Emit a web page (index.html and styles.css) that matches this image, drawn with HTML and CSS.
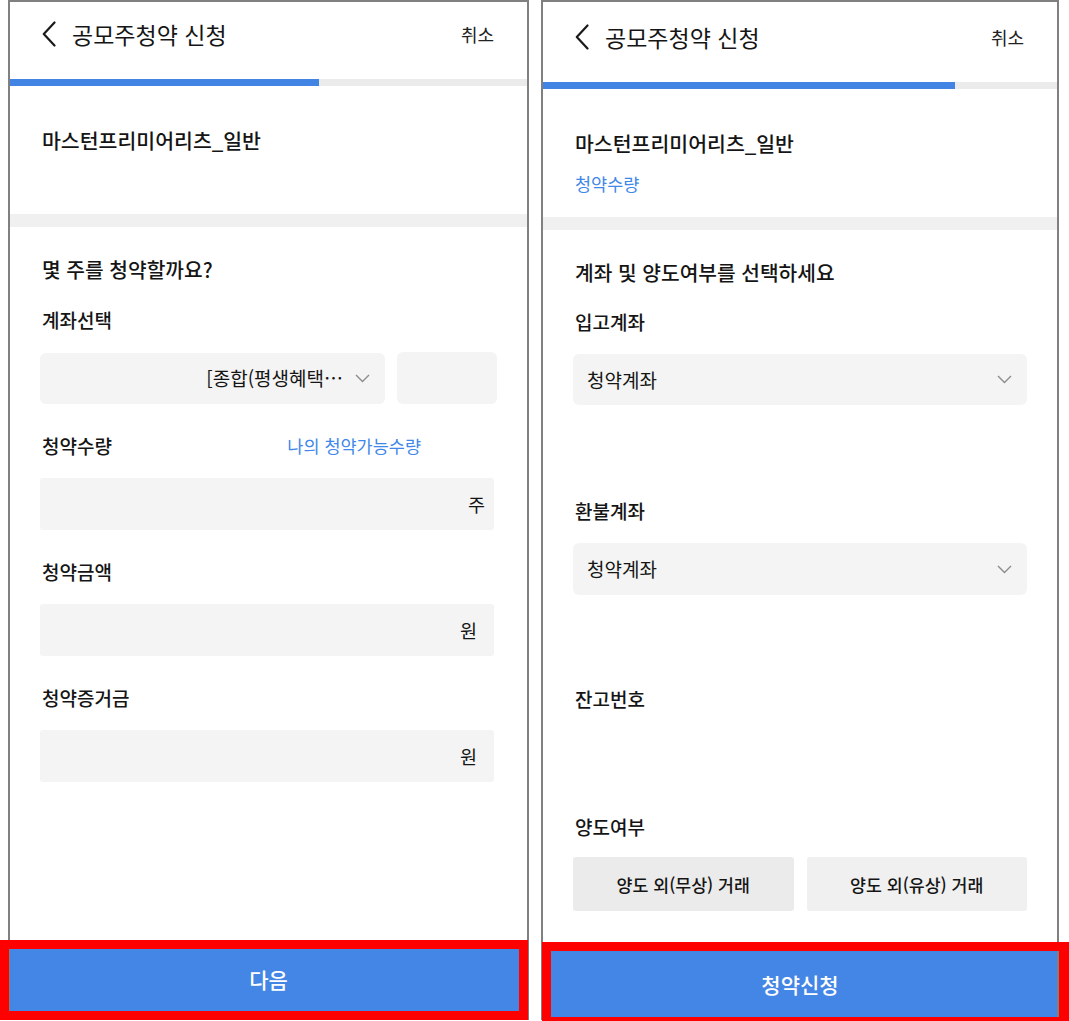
FILE: index.html
```html
<!DOCTYPE html>
<html lang="ko">
<head>
<meta charset="utf-8">
<title>공모주청약 신청</title>
<link rel="stylesheet" href="styles.css">
</head>
<body>
<div class="screens">
  <section class="panel panel--left">
    <header class="appbar">
      <svg class="appbar__back" width="14" height="26" viewBox="0 0 14 26"><path d="M12.5 1.5 L1.8 13 L12.5 24.5" fill="none" stroke="#1a1a1a" stroke-width="2.2" stroke-linecap="round" stroke-linejoin="round"/></svg>
      <h1 class="appbar__title">공모주청약 신청</h1>
      <span class="appbar__cancel">취소</span>
    </header>
    <div class="progress"><div class="progress__fill" style="width:59.8%"></div></div>
    <div class="product">
      <p class="product__name">마스턴프리미어리츠_일반</p>
    </div>
    <div class="band"></div>
    <div class="form">
      <h2 class="form__title">몇 주를 청약할까요?</h2>
      <div class="field field--first">
        <div class="field__label">계좌선택</div>
        <div class="account-row">
          <div class="select select--account">
            <span class="select__value">[종합(평생혜택…</span>
            <svg class="select__chev" width="15" height="9" viewBox="0 0 15 9"><path d="M1 1 L7.5 7.5 L14 1" fill="none" stroke="#8c8c8c" stroke-width="1.4"/></svg>
          </div>
          <div class="account-sub"></div>
        </div>
      </div>
      <div class="field">
        <div class="field__label field__label--split">
          <span>청약수량</span>
          <span class="link">나의 청약가능수량</span>
        </div>
        <div class="input input--qty"><span class="input__unit">주</span></div>
      </div>
      <div class="field">
        <div class="field__label">청약금액</div>
        <div class="input"><span class="input__unit">원</span></div>
      </div>
      <div class="field">
        <div class="field__label">청약증거금</div>
        <div class="input"><span class="input__unit">원</span></div>
      </div>
    </div>
    <button class="cta cta--left">다음</button>
  </section>

  <section class="panel panel--right">
    <header class="appbar">
      <svg class="appbar__back" width="14" height="26" viewBox="0 0 14 26"><path d="M12.5 1.5 L1.8 13 L12.5 24.5" fill="none" stroke="#1a1a1a" stroke-width="2.2" stroke-linecap="round" stroke-linejoin="round"/></svg>
      <h1 class="appbar__title">공모주청약 신청</h1>
      <span class="appbar__cancel">취소</span>
    </header>
    <div class="progress"><div class="progress__fill" style="width:80.2%"></div></div>
    <div class="product">
      <p class="product__name">마스턴프리미어리츠_일반</p>
      <p class="product__sub">청약수량</p>
    </div>
    <div class="band"></div>
    <div class="form form--right">
      <h2 class="form__title">계좌 및 양도여부를 선택하세요</h2>
      <div class="field field--in">
        <div class="field__label">입고계좌</div>
        <div class="select select--full">
          <span class="select__value select__value--left">청약계좌</span>
          <svg class="select__chev" width="15" height="9" viewBox="0 0 15 9"><path d="M1 1 L7.5 7.5 L14 1" fill="none" stroke="#8c8c8c" stroke-width="1.4"/></svg>
        </div>
      </div>
      <div class="field field--refund">
        <div class="field__label">환불계좌</div>
        <div class="select select--full select--tall">
          <span class="select__value select__value--left">청약계좌</span>
          <svg class="select__chev" width="15" height="9" viewBox="0 0 15 9"><path d="M1 1 L7.5 7.5 L14 1" fill="none" stroke="#8c8c8c" stroke-width="1.4"/></svg>
        </div>
      </div>
      <div class="field field--balance">
        <div class="field__label">잔고번호</div>
      </div>
      <div class="field field--transfer">
        <div class="field__label">양도여부</div>
        <div class="choices">
          <button class="choice choice--dark">양도 외(무상) 거래</button>
          <button class="choice">양도 외(유상) 거래</button>
        </div>
      </div>
    </div>
    <button class="cta cta--right">청약신청</button>
  </section>

  <div class="highlight highlight--left"></div>
  <div class="highlight highlight--right"></div>
</div>
</body>
</html>
```

FILE: styles.css
```css
html, body {
  margin: 0;
  padding: 0;
  overflow: hidden;
  background: #ffffff;
}

body {
  font-family: "Noto Sans CJK KR", "Noto Sans", sans-serif;
  color: #151515;
}

.screens {
  position: relative;
  display: flex;
  align-items: flex-start;
  gap: 12px;
  padding-left: 8px;
  height: 1021px;
}

.panel {
  box-sizing: border-box;
  height: 1020px;
  border: 2px solid #808080;
  background: #ffffff;
  display: flex;
  flex-direction: column;
}

.panel--left {
  width: 521px;
}

.panel--right {
  width: 518px;
  padding-top: 3px;
}

/* app bar */
.appbar {
  height: 64px;
  margin-bottom: 13px;
  display: flex;
  align-items: center;
  padding: 0 33px 0 32px;
}

.appbar__back {
  flex: none;
  display: block;
}

.appbar__title {
  margin: 0 0 0 16px;
  font-size: 23px;
  font-weight: 400;
  line-height: 30px;
  color: #151515;
}

.appbar__cancel {
  margin-left: auto;
  font-size: 18px;
  line-height: 24px;
  color: #222;
}

/* progress */
.progress {
  height: 7px;
  background: #ebebeb;
}

.progress__fill {
  height: 100%;
  background: #4284e4;
}

/* product */
.product {
  height: 128px;
  box-sizing: border-box;
  padding: 40px 32px 0;
}

.product__name {
  margin: 0;
  font-size: 20.5px;
  font-weight: 500;
  line-height: 28px;
  color: #151515;
}

.product__sub {
  margin: 16px 0 0;
  font-size: 17.5px;
  line-height: 22px;
  color: #3f87e8;
}

.band {
  height: 13px;
  background: #f0f0f0;
}

/* form */
.form {
  padding: 28px 33px 0 30px;
}

.form--right {
  padding: 28px 30px 0 30px;
}

.form__title {
  margin: 0;
  padding-left: 2px;
  font-size: 20.3px;
  font-weight: 500;
  line-height: 28px;
}

.field {
  margin-top: 29px;
}

.field--first {
  margin-top: 24px;
}

.field--in {
  margin-top: 23px;
}

.field--refund {
  margin-top: 93px;
}

.field--balance {
  margin-top: 91px;
}

.field--transfer {
  margin-top: 102px;
}

.field__label {
  padding-left: 2px;
  font-size: 19px;
  font-weight: 500;
  line-height: 26px;
  margin-bottom: 19px;
  color: #151515;
}

.field--transfer .field__label {
  margin-bottom: 17px;
}

.field__label--split {
  display: flex;
  justify-content: space-between;
}

.link {
  font-size: 17.5px;
  font-weight: 400;
  color: #3f87e8;
  margin-right: 73px;
}

/* account select row */
.account-row {
  display: flex;
  align-items: center;
  gap: 12px;
  margin-right: -3px;
}

.select {
  box-sizing: border-box;
  height: 51px;
  background: #f4f4f4;
  border-radius: 6px;
  display: flex;
  align-items: center;
  padding: 0 15px 0 14px;
}

.select--tall {
  height: 52px;
}

.select--account {
  flex: none;
  width: 345px;
  justify-content: flex-end;
}

.select__value {
  font-size: 19px;
  line-height: 24px;
  color: #151515;
  margin-right: 12px;
  white-space: nowrap;
}

.select__value--left {
  margin-right: auto;
}

.select__chev {
  flex: none;
  display: block;
}

.account-sub {
  flex: none;
  width: 100px;
  height: 52px;
  background: #f4f4f4;
  border-radius: 6px;
}

/* inputs */
.input {
  box-sizing: border-box;
  height: 52px;
  background: #f4f4f4;
  border-radius: 3px;
  display: flex;
  align-items: center;
  justify-content: flex-end;
  padding-right: 17px;
}

.input--qty {
  padding-right: 9px;
}

.input__unit {
  font-size: 18.5px;
  line-height: 24px;
  color: #151515;
}

/* choices */
.choices {
  display: flex;
  gap: 13px;
}

.choice {
  flex: 1;
  height: 54px;
  border: 0;
  border-radius: 3px;
  background: #f0f0f0;
  font-family: inherit;
  font-size: 17.3px;
  font-weight: 500;
  color: #151515;
  padding: 0;
}

.choice--dark {
  background: #ebebeb;
}

/* call to action */
.cta {
  margin-top: auto;
  height: 66px;
  border: 0;
  background: #4486e5;
  color: #ffffff;
  font-family: inherit;
  font-size: 21px;
  font-weight: 500;
  padding: 0;
}

.cta--left {
  margin-bottom: 6px;
}

.cta--right {
  margin-bottom: 1px;
}

/* annotation highlight boxes */
.highlight {
  position: absolute;
  box-sizing: border-box;
  border: 9px solid #ff0000;
  pointer-events: none;
}

.highlight--left {
  left: 0;
  top: 940px;
  width: 528px;
  height: 80px;
}

.highlight--right {
  left: 542px;
  top: 942px;
  width: 527px;
  height: 84px;
  border-right-width: 10px;
}
```
